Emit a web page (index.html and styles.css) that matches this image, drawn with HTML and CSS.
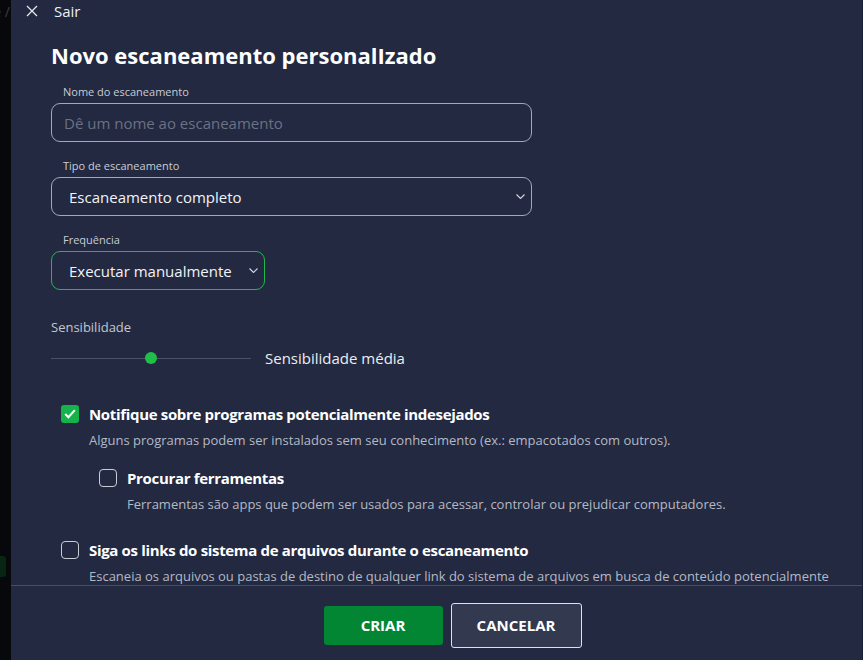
FILE: index.html
```html
<!DOCTYPE html>
<html lang="pt-BR">
<head>
<meta charset="UTF-8">
<meta name="viewport" content="width=device-width, initial-scale=1.0">
<title>Novo escaneamento personalizado</title>
<link rel="stylesheet" href="styles.css">
</head>
<body>

<div class="backdrop">
  <span class="backdrop-crumb">e /</span>
  <span class="backdrop-btn"></span>
</div>

<div class="panel">
  <div class="content">
    <div class="topbar">
      <svg class="close-icon" width="12" height="12" viewBox="0 0 12 12">
        <path d="M1 1 L11 11 M11 1 L1 11" stroke="#e6e8ee" stroke-width="1.3" fill="none"/>
      </svg>
      <span>Sair</span>
    </div>

    <h1>Novo escaneamento personalIzado</h1>

    <div class="field">
      <label class="field-label" for="scan-name">Nome do escaneamento</label>
      <input class="text-input" type="text" id="scan-name" placeholder="Dê um nome ao escaneamento">
    </div>

    <div class="field">
      <div class="field-label">Tipo de escaneamento</div>
      <div class="select wide">
        <span>Escaneamento completo</span>
        <svg class="chevron" width="9" height="5" viewBox="0 0 9 5"><path d="M0.5 0.5 L4.5 4.5 L8.5 0.5" stroke="#d4d7de" stroke-width="1.1" fill="none"/></svg>
      </div>
    </div>

    <div class="field">
      <div class="field-label">Frequência</div>
      <div class="select narrow focused">
        <span>Executar manualmente</span>
        <svg class="chevron" width="9" height="5" viewBox="0 0 9 5"><path d="M0.5 0.5 L4.5 4.5 L8.5 0.5" stroke="#d4d7de" stroke-width="1.1" fill="none"/></svg>
      </div>
    </div>

    <div class="sensitivity">
      <div class="sens-label">Sensibilidade</div>
      <div class="sens-row">
        <div class="track"><span class="thumb"></span></div>
        <span class="sens-value">Sensibilidade média</span>
      </div>
    </div>

    <div class="option">
      <span class="checkbox checked">
        <svg width="12" height="10" viewBox="0 0 12 10"><path d="M1.2 5 L4.4 8.2 L10.8 1.2" stroke="#fff" stroke-width="2" fill="none"/></svg>
      </span>
      <div class="option-text">
        <div class="option-title">Notifique sobre programas potencialmente indesejados</div>
        <div class="option-desc">Alguns programas podem ser instalados sem seu conhecimento (ex.: empacotados com outros).</div>
      </div>
    </div>

    <div class="option sub">
      <span class="checkbox"></span>
      <div class="option-text">
        <div class="option-title">Procurar ferramentas</div>
        <div class="option-desc">Ferramentas são apps que podem ser usados para acessar, controlar ou prejudicar computadores.</div>
      </div>
    </div>

    <div class="option last">
      <span class="checkbox"></span>
      <div class="option-text">
        <div class="option-title">Siga os links do sistema de arquivos durante o escaneamento</div>
        <div class="option-desc">Escaneia os arquivos ou pastas de destino de qualquer link do sistema de arquivos em busca de conteúdo potencialmente malicioso.</div>
      </div>
    </div>
  </div>

  <div class="footer">
    <button class="btn primary">CRIAR</button>
    <button class="btn secondary">CANCELAR</button>
  </div>
</div>

</body>
</html>
```

FILE: styles.css
```css
body {
  margin: 0;
  padding: 0;
  height: 660px;
  overflow: hidden;
  display: flex;
  background-color: #07080c;
  font-family: "Open Sans", "Liberation Sans", sans-serif;
  color: #ffffff;
}
.backdrop {
  width: 11px;
  flex-shrink: 0;
  position: relative;
  overflow: hidden;
}
.backdrop-crumb {
  position: absolute;
  top: 2px;
  right: 1px;
  white-space: nowrap;
  font-size: 14px;
  color: #3b3e46;
}
.backdrop-btn {
  position: absolute;
  top: 556px;
  left: -20px;
  width: 26px;
  height: 21px;
  border-radius: 3px;
  background-color: #082412;
}
.panel {
  flex: 1;
  min-width: 0;
  display: flex;
  flex-direction: column;
  background-color: #222941;
  border-right: 1px solid #1a2033;
}
.content {
  flex: 1;
  overflow: hidden;
  padding: 0 0 0 40px;
}
.topbar {
  display: flex;
  align-items: center;
  height: 21px;
  margin-left: -25px;
  font-size: 15px;
  color: #eef0f4;
}
.close-icon {
  margin-right: 16px;
}
h1 {
  margin: 20px 0 17px;
  font-size: 22px;
  font-weight: 700;
  line-height: 28px;
}
.field {
  margin-bottom: 18px;
}
.field-label {
  display: block;
  margin: 0 0 5px 12px;
  font-size: 11px;
  line-height: 12px;
  color: #c9ccd5;
}
.text-input {
  box-sizing: border-box;
  width: 481px;
  height: 39px;
  padding: 0 12px;
  border: 1px solid #a4a8b4;
  border-radius: 9px;
  background: transparent;
  font-family: inherit;
  font-size: 15px;
  color: #ffffff;
  outline: none;
}
.text-input::placeholder {
  color: #6c7183;
}
.select {
  box-sizing: border-box;
  display: flex;
  align-items: center;
  justify-content: space-between;
  height: 39px;
  padding: 0 6px 0 17px;
  border: 1px solid #a4a8b4;
  border-radius: 9px;
  font-size: 15px;
  color: #f2f3f6;
}
.select.wide {
  width: 481px;
}
.select.narrow {
  width: 214px;
}
.select.focused {
  border-color: #1fb84f;
}
.sensitivity {
  margin-top: 29px;
}
.sens-label {
  font-size: 13px;
  color: #c4c7d0;
  line-height: 16px;
}
.sens-row {
  display: flex;
  align-items: center;
  margin-top: 13px;
}
.track {
  position: relative;
  width: 200px;
  height: 1px;
  background-color: #4c5266;
}
.thumb {
  position: absolute;
  left: 94px;
  top: -6px;
  width: 12px;
  height: 12px;
  border-radius: 50%;
  background-color: #1fbf4a;
}
.sens-value {
  margin-left: 14px;
  font-size: 15px;
  color: #eceef2;
}
.option {
  display: flex;
  align-items: flex-start;
  margin: 36px 0 0 10px;
}
.option.sub {
  margin: 20px 0 0 48px;
}
.option.last {
  margin-top: 28px;
}
.option-text {
  max-width: 760px;
}
.checkbox {
  box-sizing: border-box;
  flex-shrink: 0;
  display: flex;
  align-items: center;
  justify-content: center;
  width: 18px;
  height: 18px;
  margin: 1px 10px 0 0;
  border: 1px solid #c9ccd5;
  border-radius: 4px;
}
.checkbox.checked {
  border: none;
  background-color: #16b34a;
  border-radius: 3px;
}
.option-title {
  font-size: 15px;
  font-weight: 700;
  line-height: 20px;
  letter-spacing: -0.33px;
}
.option-desc {
  margin-top: 8px;
  font-size: 13px;
  line-height: 16px;
  color: #b5b9c4;
}
.footer {
  box-sizing: border-box;
  height: 75px;
  flex-shrink: 0;
  display: flex;
  align-items: center;
  justify-content: center;
  gap: 8px;
  padding: 4px 0 0 32px;
  border-top: 1px solid #474d62;
}
.btn {
  font-family: inherit;
  font-size: 15px;
  font-weight: 700;
  color: #ffffff;
  border-radius: 3px;
  cursor: pointer;
}
.primary {
  width: 119px;
  height: 39px;
  border: none;
  background-color: #028634;
}
.secondary {
  width: 131px;
  height: 45px;
  border: 1px solid #dfe1e7;
  background-color: #333a50;
}
```
